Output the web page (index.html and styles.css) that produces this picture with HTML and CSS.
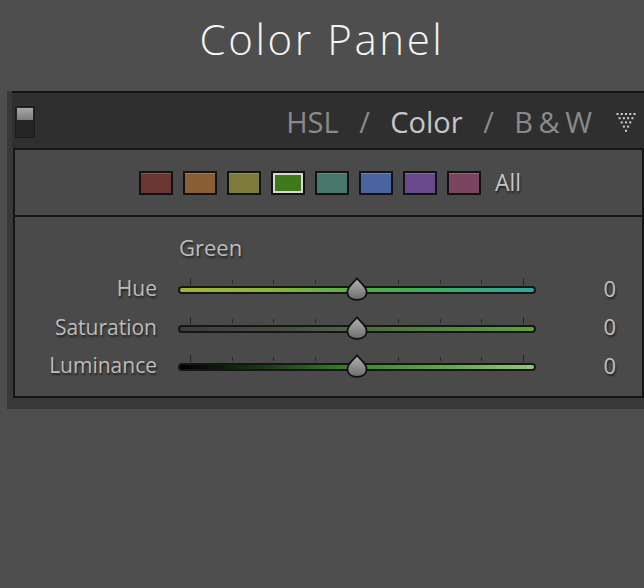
FILE: index.html
```html
<!DOCTYPE html>
<html>
<head>
<meta charset="utf-8">
<link rel="stylesheet" href="styles.css">
</head>
<body>
<h1 class="title">Color Panel</h1>
<div class="panel">
  <div class="header">
    <div class="switch"><div class="switch-knob"></div></div>
    <div class="tabs">
      <span class="tab">HSL</span>
      <span class="sep">/</span>
      <span class="tab active">Color</span>
      <span class="sep">/</span>
      <span class="tab bw">B &amp; W</span>
    </div>
    <svg class="menu-icon" width="20" height="20" viewBox="0 0 20 20">
      <g fill="#d0d0d0">
        <rect x="0.5" y="1" width="2" height="2"/><rect x="4.75" y="1" width="2" height="2"/><rect x="9" y="1" width="2" height="2"/><rect x="13.25" y="1" width="2" height="2"/><rect x="17.5" y="1" width="2" height="2"/>
        <rect x="2.6" y="5.2" width="2" height="2"/><rect x="6.9" y="5.2" width="2" height="2"/><rect x="11.1" y="5.2" width="2" height="2"/><rect x="15.4" y="5.2" width="2" height="2"/>
        <rect x="4.75" y="9.4" width="2" height="2"/><rect x="9" y="9.4" width="2" height="2"/><rect x="13.25" y="9.4" width="2" height="2"/>
        <rect x="6.9" y="13.6" width="2" height="2"/><rect x="11.1" y="13.6" width="2" height="2"/>
        <rect x="9" y="17.8" width="2" height="2"/>
      </g>
    </svg>
  </div>
  <div class="inner">
    <div class="swatches">
      <span class="swatch red"></span>
      <span class="swatch orange"></span>
      <span class="swatch yellow"></span>
      <span class="swatch green selected"></span>
      <span class="swatch aqua"></span>
      <span class="swatch blue"></span>
      <span class="swatch purple"></span>
      <span class="swatch magenta"></span>
      <span class="all">All</span>
    </div>
    <div class="sliders">
      <div class="grid">
        <div></div>
        <div class="group-label">Green</div>
        <div></div>

        <div class="label">Hue</div>
        <div class="track-cell">
          <div class="ticks"></div>
          <div class="bar hue"></div>
          <svg class="thumb" width="22" height="24" viewBox="0 0 22 24"><defs><linearGradient id="tg1" x1="0" y1="0" x2="0" y2="1"><stop offset="0" stop-color="#b4b4b4"/><stop offset="1" stop-color="#6c6c6c"/></linearGradient></defs><path d="M11 1.2 C12.8 4.6 20.6 9.2 20.6 15 C20.6 20.2 16.4 22.9 11 22.9 C5.6 22.9 1.4 20.2 1.4 15 C1.4 9.2 9.2 4.6 11 1.2 Z" fill="url(#tg1)" stroke="#111" stroke-width="1.8" stroke-linejoin="round"/></svg>
        </div>
        <div class="value">0</div>

        <div class="label">Saturation</div>
        <div class="track-cell">
          <div class="ticks"></div>
          <div class="bar sat"></div>
          <svg class="thumb" width="22" height="24" viewBox="0 0 22 24"><path d="M11 1.2 C12.8 4.6 20.6 9.2 20.6 15 C20.6 20.2 16.4 22.9 11 22.9 C5.6 22.9 1.4 20.2 1.4 15 C1.4 9.2 9.2 4.6 11 1.2 Z" fill="url(#tg1)" stroke="#111" stroke-width="1.8" stroke-linejoin="round"/></svg>
        </div>
        <div class="value">0</div>

        <div class="label">Luminance</div>
        <div class="track-cell">
          <div class="ticks"></div>
          <div class="bar lum"></div>
          <svg class="thumb" width="22" height="24" viewBox="0 0 22 24"><path d="M11 1.2 C12.8 4.6 20.6 9.2 20.6 15 C20.6 20.2 16.4 22.9 11 22.9 C5.6 22.9 1.4 20.2 1.4 15 C1.4 9.2 9.2 4.6 11 1.2 Z" fill="url(#tg1)" stroke="#111" stroke-width="1.8" stroke-linejoin="round"/></svg>
        </div>
        <div class="value">0</div>
      </div>
    </div>
  </div>
</div>
</body>
</html>
```
FILE: styles.css
```css
html, body {
  margin: 0;
  padding: 0;
  background: #4e4e4e;
  height: 100%;
  overflow: hidden;
}
body {
  font-family: "Open Sans", "DejaVu Sans", sans-serif;
}
.title {
  margin: 14px 0 0 0;
  height: 50px;
  line-height: 50px;
  font-size: 42px;
  font-weight: 300;
  letter-spacing: 2.6px;
  color: #f4f4f4;
  text-align: center;
}
.panel {
  margin: 27px 0 0 7px;
  background: #383838;
  padding: 0 0 11px 5px;
}
.header {
  height: 55px;
  background: #2f2f2f;
  border-top: 2px solid #141414;
  display: flex;
  align-items: center;
  padding-right: 8px;
}
.switch {
  margin: 3px 0 0 3px;
  width: 16px;
  height: 28px;
  border: 1px solid #1a1a1a;
  background: #252525;
  box-shadow: 0 0 1px #444;
  padding: 1px;
  box-sizing: content-box;
}
.switch-knob {
  height: 12px;
  background: linear-gradient(#a6a6a6, #7c7c7c);
}
.tabs {
  margin-left: auto;
  margin-top: 3px;
  display: flex;
  gap: 20.5px;
  font-size: 29px;
  line-height: 36px;
  color: #8a8a8a;
}
.tab.active {
  color: #c6c6c6;
}
.tab.bw {
  word-spacing: -2px;
}
.menu-icon {
  margin: 3px 0 0 24px;
}
.inner {
  margin-left: 1px;
  border: 2px solid #151515;
  background: #4a4a4a;
}
.swatches {
  height: 65px;
  border-bottom: 2px solid #151515;
  display: flex;
  align-items: center;
  padding-left: 124px;
}
.swatch {
  width: 30px;
  height: 20px;
  border: 2px solid #121212;
  margin-right: 10px;
  box-shadow: inset 0 1px 0 rgba(255,255,255,0.18);
}
.swatch.red { background: #6a3633; }
.swatch.orange { background: #8a5e35; }
.swatch.yellow { background: #7d7a3a; }
.swatch.green { background: #3e7a1c; }
.swatch.aqua { background: #47776a; }
.swatch.blue { background: #4a64a2; }
.swatch.purple { background: #6a4a8c; }
.swatch.magenta { background: #7a4560; }
.swatch.selected {
  width: 26px;
  height: 16px;
  border: 2px solid #d8d8d8;
  outline: 2px solid #121212;
  margin-left: 2px;
  margin-right: 12px;
  box-shadow: none;
}
.all {
  margin-left: 4px;
  padding-bottom: 2px;
  font-size: 23px;
  color: #c4c4c4;
  text-shadow: 1px 2px 2px rgba(0,0,0,0.6);
}
.sliders {
  padding: 19.5px 0 9.75px 0;
}
.grid {
  display: grid;
  grid-template-columns: 142px 358px 59px;
  column-gap: 21px;
  align-items: center;
}
.group-label {
  padding-left: 1px;
  font-size: 22px;
  line-height: 26px;
  height: 23px;
  padding-bottom: 3px;
  margin-top: -3px;
  margin-bottom: 11.25px;
  color: #bcbcbc;
  text-shadow: 1px 2px 2px rgba(0,0,0,0.55);
}
.label {
  text-align: right;
  font-size: 21px;
  line-height: 26px;
  padding-bottom: 4px;
  color: #bcbcbc;
  text-shadow: 1px 2px 2px rgba(0,0,0,0.55);
}
.value {
  text-align: right;
  font-size: 22px;
  line-height: 26px;
  padding-bottom: 5px;
  color: #c0c0c0;
  text-shadow: 1px 2px 2px rgba(0,0,0,0.55);
}
.track-cell {
  position: relative;
  height: 38.5px;
  box-sizing: border-box;
  padding-top: 7.25px;
}
.ticks {
  margin: 0 12px;
  height: 7px;
  box-sizing: border-box;
  border-left: 1px solid #262626;
  border-right: 1px solid #262626;
  background: repeating-linear-gradient(90deg, #2a2a2a 0 1px, transparent 1px 41.625px) 0 2px / 100% 4px no-repeat;
  background-origin: border-box;
  background-clip: border-box;
}
.bar {
  margin-top: 1px;
  height: 8px;
  box-sizing: border-box;
  border: 2px solid #161616;
  border-radius: 4px;
}
.bar.hue {
  background: linear-gradient(90deg, #a4b635 0%, #8cb53a 25%, #4fb042 50%, #3aae5c 72%, #2fa6a0 100%);
}
.bar.sat {
  background: linear-gradient(90deg, #3c3c3c 0%, #454f40 30%, #4c6a40 50%, #55883c 75%, #5ca43a 100%);
}
.bar.lum {
  background: linear-gradient(90deg, #000 0%, #1b3e12 25%, #3a8a2a 50%, #62a648 75%, #92c87a 100%);
}
.thumb {
  position: absolute;
  left: 50%;
  top: 6.5px;
  transform: translateX(-50%);
}
```
